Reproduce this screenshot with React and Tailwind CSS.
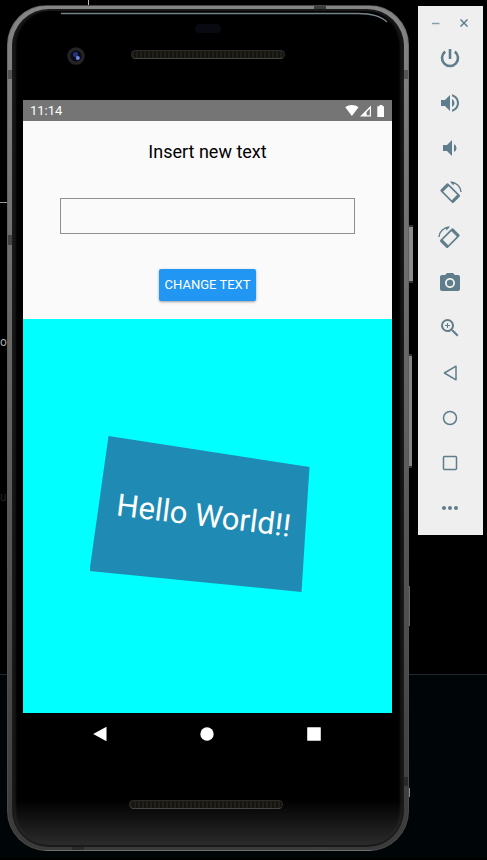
import {
  MdPowerSettingsNew,
  MdVolumeUp,
  MdVolumeDown,
  MdPhotoCamera,
  MdZoomIn,
  MdMoreHoriz,
} from "react-icons/md";

function RotateIcon({ flip }) {
  return (
    <svg viewBox="0 0 24 24" className={flip ? "size-6 -scale-x-100" : "size-6"} fill="currentColor">
      <path
        transform="rotate(45 12 12)"
        fillRule="evenodd"
        d="M4.5 6.5 H20 Q21.5 6.5 21.5 8 V16 Q21.5 17.5 20 17.5 H4.5 Q3 17.5 3 16 V8 Q3 6.5 4.5 6.5 Z M6.2 8.2 V15.8 H18.3 V8.2 Z"
      />
      <path d="M13 1.3 C18.6 1.6 22.6 5.4 23 11" fill="none" stroke="currentColor" strokeWidth="1.4" />
      <path d="M12 0.6 L16.5 1 L15.4 4.6 Z" />
    </svg>
  );
}

function PowerIcon() {
  return (
    <svg viewBox="0 0 24 24" className="size-6" fill="none" stroke="currentColor" strokeWidth="2.6">
      <path d="M12 3 V13" />
      <path d="M7.2 5.6 A8 8 0 1 0 16.8 5.6" />
    </svg>
  );
}

function BackIcon() {
  return (
    <svg viewBox="0 0 24 24" className="size-6" fill="none" stroke="currentColor" strokeWidth="1.5" strokeLinejoin="round">
      <path d="M18 5.2 V18.8 L6.4 12 Z" />
    </svg>
  );
}

function HomeIcon() {
  return (
    <svg viewBox="0 0 24 24" className="size-6" fill="none" stroke="currentColor" strokeWidth="1.5">
      <circle cx="12" cy="12" r="6.5" />
    </svg>
  );
}

function OverviewIcon() {
  return (
    <svg viewBox="0 0 24 24" className="size-6" fill="none" stroke="currentColor" strokeWidth="1.5">
      <rect x="5.5" y="5.5" width="13" height="13" rx="1" />
    </svg>
  );
}

const tools = [
  ["Power", <PowerIcon />],
  ["Volume up", <MdVolumeUp size={24} />],
  ["Volume down", <MdVolumeDown size={24} />],
  ["Rotate left", <RotateIcon />],
  ["Rotate right", <RotateIcon flip />],
  ["Take screenshot", <MdPhotoCamera size={24} />],
  ["Zoom", <MdZoomIn size={24} />],
  ["Back", <BackIcon />],
  ["Home", <HomeIcon />],
  ["Overview", <OverviewIcon />],
  ["More", <MdMoreHoriz size={24} />],
];

function Toolbar() {
  return (
    <aside className="w-[65px] shrink-0 bg-[#efefef] pr-px pb-[5px] text-[#607d8b]">
      <div className="flex h-[29px] items-center justify-center gap-4 pt-1">
        <button aria-label="Minimize" className="flex size-3 items-center justify-center">
          <svg viewBox="0 0 12 12" className="size-3" stroke="currentColor" strokeWidth="1.5" opacity="0.7">
            <path d="M2 6.5 H9.5" />
          </svg>
        </button>
        <button aria-label="Close" className="flex size-3 items-center justify-center">
          <svg viewBox="0 0 12 12" className="size-3" stroke="currentColor" strokeWidth="1.5">
            <path d="M2.5 2.5 L9.5 9.5 M9.5 2.5 L2.5 9.5" />
          </svg>
        </button>
      </div>
      <div className="flex flex-col">
        {tools.map(([name, icon]) => (
          <button key={name} aria-label={name} className="flex h-[45px] items-center justify-center">
            {icon}
          </button>
        ))}
      </div>
    </aside>
  );
}

function Speaker() {
  return (
    <div className="h-[9px] w-[154px] rounded-full border border-[#2c2b29] border-b-[#484744] bg-[repeating-linear-gradient(90deg,#211f19_0px,#211f19_2px,#15140f_2px,#15140f_4px)]" />
  );
}

function StatusBar() {
  return (
    <div className="flex h-[21px] items-center justify-between bg-[#757575] px-[7px] text-white">
      <span className="text-[13px] leading-5">11:14</span>
      <svg viewBox="0 0 40 14" className="h-[14px] w-10" fill="#fff">
        <path d="M0.3 3.3 C4 0.3 9.8 0.3 13.5 3.3 L6.9 12 Z" />
        <path fillRule="evenodd" d="M15 12.5 L26 1.5 V12.5 Z M21.6 11.2 H24.8 V4.8 L21.6 8 Z" />
        <path d="M34.5 1 H37.5 V2.2 H39 V13 H32.3 V2.2 H34.5 Z" />
      </svg>
    </div>
  );
}

function Screen() {
  return (
    <main>
      <StatusBar />
      <section className="flex h-[198px] flex-col items-center bg-[#fafafa] px-[37px]">
        <label htmlFor="new-text" className="mt-[19px] text-[18px] leading-6 text-black">
          Insert new text
        </label>
        <input id="new-text" type="text" className="mt-[34px] h-9 w-full border border-[#8f8f8f] bg-transparent px-2 text-sm text-black outline-none" />
        <button className="mt-[35px] h-8 rounded-xs bg-[#2196f3] px-[6px] text-[13px] whitespace-nowrap text-white shadow-sm shadow-black/30">
          CHANGE TEXT
        </button>
      </section>
      <section className="flex h-[394px] items-center justify-center bg-[#00ffff] pb-1">
        <div className="mr-4 flex h-[156px] w-[220px] items-center justify-center bg-[#1f8bb5] pt-1 pl-2 [clip-path:polygon(19px_0,100%_31px,212px_100%,0_135px)]">
          <span className="rotate-[7deg] text-[31px] leading-10 whitespace-nowrap text-white">Hello World!!</span>
        </div>
      </section>
    </main>
  );
}

function NavBar() {
  return (
    <nav className="flex h-[42px] items-center justify-around pr-6 pl-[23px] text-white">
      <button aria-label="Back">
        <svg viewBox="0 0 16 16" className="size-4" fill="currentColor">
          <path d="M14.5 0.8 V15.2 L1.2 8 Z" />
        </svg>
      </button>
      <button aria-label="Home">
        <svg viewBox="0 0 16 16" className="size-4" fill="currentColor">
          <circle cx="8" cy="8" r="6.7" />
        </svg>
      </button>
      <button aria-label="Overview">
        <svg viewBox="0 0 16 16" className="size-4" fill="currentColor">
          <rect x="1.2" y="1.2" width="13.6" height="13.6" rx="0.5" />
        </svg>
      </button>
    </nav>
  );
}

function Phone() {
  return (
    <div className="relative min-w-0 flex-1">
      {/* side keys */}
      <div className="absolute top-[220px] -right-1 h-[58px] w-2 border-y-2 border-[#333] bg-[#8c8c8c]" />
      <div className="absolute top-[349px] -right-[3px] h-[114px] w-2 border-y-2 border-[#333] bg-[#858585]" />
      <div className="absolute top-[581px] -right-px h-10 w-2 bg-[#666]" />
      <div className="absolute top-[783px] -right-px h-[9px] w-2 bg-[#888]" />
      <div className="relative overflow-hidden rounded-[40px] border border-[#55555580] bg-linear-to-b from-[#858585] via-[#606060] to-[#3a3a3a] px-1 pt-[3px] pb-[3px]">
        {/* antenna bands */}
        <div className="absolute top-16 left-0 h-[9px] w-full bg-[#555]" />
        <div className="absolute top-[229px] left-0 h-[10px] w-3 bg-[#444]" />
        <div className="absolute top-[771px] right-0 h-[9px] w-3 bg-[#2a2a2a]" />
        <div className="absolute top-0 right-[82px] h-full w-3 bg-[#3c3c3c]" />
        <div className="absolute bottom-0 left-16 h-3 w-3 bg-[#2a2a2a]" />
        <div className="relative rounded-[37px] border-x border-t-2 border-b-2 border-[#1a1a1a] bg-black pr-[11px] pl-[10px] shadow-[inset_4px_0_2px_-1px_#161616,inset_-4px_0_2px_-1px_#161616]">
          <svg viewBox="0 0 390 20" preserveAspectRatio="none" className="absolute top-0 left-0 h-5 w-full" fill="none">
            <path d="M48 2.5 H345 C360 2.5 368 5 374 11" stroke="#76838a" strokeWidth="1.4" />
          </svg>
          <div className="relative flex h-[89px] justify-center">
            <svg viewBox="0 0 18 18" className="absolute top-9 left-11 size-[18px]">
              <circle cx="9" cy="9" r="8.8" fill="#242424" />
              <circle cx="9" cy="9" r="5.5" fill="#080a18" />
              <circle cx="8.5" cy="7.5" r="2.6" fill="#26327c" />
              <circle cx="10.8" cy="11" r="2" fill="#7186dc" />
            </svg>
            <div className="absolute top-[13px] h-[9px] w-[26px] rounded-full bg-[#090a11]" />
            <div className="mt-[39px]">
              <Speaker />
            </div>
          </div>
          <Screen />
          <NavBar />
          <div className="-mr-[11px] -ml-[10px] mt-9 flex h-[54px] justify-center rounded-b-[35px] bg-linear-to-b from-transparent from-15% to-[#2b2b2b] pt-[9px]">
            <div className="-ml-[5px]">
              <Speaker />
            </div>
          </div>
        </div>
      </div>
    </div>
  );
}

export default function App() {
  return (
    <div className="relative min-h-screen overflow-hidden bg-black font-[Roboto,sans-serif]">
      {/* desktop behind the emulator windows */}
      <div className="absolute inset-x-0 top-[674px] bottom-[2px] border-t border-[#22272a] bg-[#000508]" />
      <div className="absolute top-[202px] left-0 h-px w-2 bg-[#999]" />
      <div className="absolute top-0 left-[88px] h-[6px] w-px bg-[#bbb]" />
      <span className="absolute top-[330px] left-0 text-[12px] leading-6 text-[#aaa]">o</span>
      <span className="absolute top-[485px] left-0 text-[12px] leading-6 text-[#222]">u</span>
      <div className="relative flex items-start gap-[9px] pt-[5px] pr-1 pl-[7px]">
        <Phone />
        <div className="pt-px">
          <Toolbar />
        </div>
      </div>
    </div>
  );
}
